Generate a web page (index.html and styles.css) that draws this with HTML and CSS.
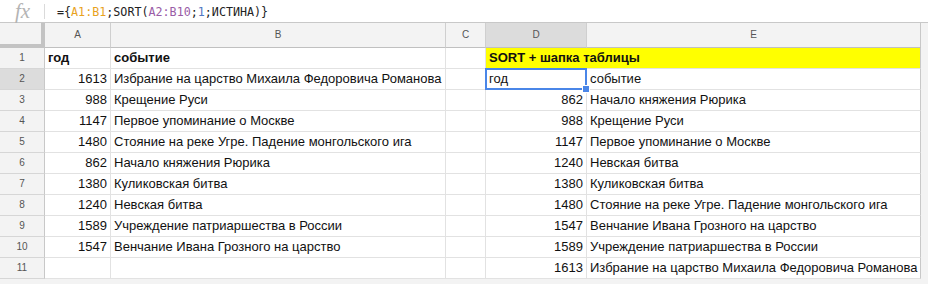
FILE: index.html
```html
<!DOCTYPE html>
<html lang="ru">
<head>
  <meta charset="UTF-8" />
  <title>SORT + шапка таблицы</title>
  <link rel="stylesheet" href="styles.css">
</head>
<body>
  <div class="formula-bar">
    <span class="fx">fx</span>
    <span class="fx-sep"></span>
    <span class="formula">={<span class="ref1">A1:B1</span>;SORT(<span class="ref2">A2:B10</span>;<span class="numarg">1</span>;ИСТИНА)}</span>
  </div>

  <div class="sheet">
    <div class="row head">
      <div class="c corner"></div>
      <div class="c ch">A</div>
      <div class="c ch">B</div>
      <div class="c ch">C</div>
      <div class="c ch active">D</div>
      <div class="c ch last">E</div>
    </div>

    <div class="row">
      <div class="c rh">1</div>
      <div class="c bold">год</div>
      <div class="c bold">событие</div>
      <div class="c"></div>
      <div class="c title last">SORT + шапка таблицы</div>
    </div>
    <div class="row">
      <div class="c rh active">2</div>
      <div class="c num">1613</div>
      <div class="c">Избрание на царство Михаила Федоровича Романова</div>
      <div class="c"></div>
      <div class="c selected">год<span class="handle"></span></div>
      <div class="c last">событие</div>
    </div>
    <div class="row">
      <div class="c rh">3</div>
      <div class="c num">988</div>
      <div class="c">Крещение Руси</div>
      <div class="c"></div>
      <div class="c num">862</div>
      <div class="c last">Начало княжения Рюрика</div>
    </div>
    <div class="row">
      <div class="c rh">4</div>
      <div class="c num">1147</div>
      <div class="c">Первое упоминание о Москве</div>
      <div class="c"></div>
      <div class="c num">988</div>
      <div class="c last">Крещение Руси</div>
    </div>
    <div class="row">
      <div class="c rh">5</div>
      <div class="c num">1480</div>
      <div class="c">Стояние на реке Угре. Падение монгольского ига</div>
      <div class="c"></div>
      <div class="c num">1147</div>
      <div class="c last">Первое упоминание о Москве</div>
    </div>
    <div class="row">
      <div class="c rh">6</div>
      <div class="c num">862</div>
      <div class="c">Начало княжения Рюрика</div>
      <div class="c"></div>
      <div class="c num">1240</div>
      <div class="c last">Невская битва</div>
    </div>
    <div class="row">
      <div class="c rh">7</div>
      <div class="c num">1380</div>
      <div class="c">Куликовская битва</div>
      <div class="c"></div>
      <div class="c num">1380</div>
      <div class="c last">Куликовская битва</div>
    </div>
    <div class="row">
      <div class="c rh">8</div>
      <div class="c num">1240</div>
      <div class="c">Невская битва</div>
      <div class="c"></div>
      <div class="c num">1480</div>
      <div class="c last">Стояние на реке Угре. Падение монгольского ига</div>
    </div>
    <div class="row">
      <div class="c rh">9</div>
      <div class="c num">1589</div>
      <div class="c">Учреждение патриаршества в России</div>
      <div class="c"></div>
      <div class="c num">1547</div>
      <div class="c last">Венчание Ивана Грозного на царство</div>
    </div>
    <div class="row">
      <div class="c rh">10</div>
      <div class="c num">1547</div>
      <div class="c">Венчание Ивана Грозного на царство</div>
      <div class="c"></div>
      <div class="c num">1589</div>
      <div class="c last">Учреждение патриаршества в России</div>
    </div>
    <div class="row">
      <div class="c rh">11</div>
      <div class="c"></div>
      <div class="c"></div>
      <div class="c"></div>
      <div class="c num">1613</div>
      <div class="c last">Избрание на царство Михаила Федоровича Романова</div>
    </div>
  </div>
</body>
</html>
```

FILE: styles.css
```css
body {
  margin: 0;
  width: 928px;
  height: 284px;
  overflow: hidden;
  background: #f3f3f3;
  font-family: "Liberation Sans", Arial, sans-serif;
  font-size: 13px;
  color: #111;
}

.formula-bar {
  height: 22px;
  background: #fff;
  border-bottom: 1px solid #c8c8c8;
  display: flex;
  align-items: center;
}
.fx {
  width: 44px;
  text-align: center;
  font-family: "Liberation Serif", serif;
  font-style: italic;
  font-size: 21px;
  color: #b4b4b4;
  line-height: 22px;
  padding-left: 1px;
  box-sizing: border-box;
}
.fx-sep {
  width: 1px;
  height: 15px;
  background: #dadada;
  margin-right: 12px;
}
.formula {
  font-family: "DejaVu Sans Mono", monospace;
  font-size: 11.7px;
  color: #222;
  padding-top: 1px;
}
.ref1 { color: #e8a21e; }
.ref2 { color: #9a5ca6; }
.numarg { color: #4f78c2; }

.sheet {
  width: 921px;
}
.row {
  display: grid;
  grid-template-columns: 45px 66px 335px 40px 101px 334px;
  height: 21px;
  background: #fff;
}
.row.head {
  height: 25px;
  background: #f3f3f3;
}

.c {
  box-sizing: border-box;
  border-right: 1px solid #e2e2e2;
  border-bottom: 1px solid #e2e2e2;
  padding: 0 3px;
  line-height: 20px;
  white-space: nowrap;
  overflow: hidden;
}
.c.last {
  border-right-color: #c8c8c8;
}
.num {
  text-align: right;
}
.bold {
  font-weight: bold;
}

.ch {
  text-align: center;
  font-size: 10px;
  color: #555;
  line-height: 24px;
  border-right-color: #cfcfcf;
  border-bottom-color: #c0c0c0;
}
.corner {
  border-right: 4px solid #c3c3c3;
  border-bottom: 4px solid #c3c3c3;
}
.rh {
  background: #f3f3f3;
  text-align: center;
  font-size: 10px;
  color: #555;
  border-right-color: #c8c8c8;
  border-bottom-color: #d6d6d6;
}
.active {
  background: #dcdcdc;
}

.title {
  grid-column: span 2;
  background: #ffff00;
  font-weight: bold;
}

.selected {
  position: relative;
  overflow: visible;
}
.selected::before {
  content: "";
  position: absolute;
  left: -1px;
  top: -1px;
  right: -1px;
  bottom: -1px;
  border: 2px solid #4a86e8;
}
.handle {
  position: absolute;
  right: -4px;
  bottom: -4px;
  width: 6px;
  height: 6px;
  background: #4a86e8;
  border: 1px solid #fff;
  z-index: 2;
}
```
